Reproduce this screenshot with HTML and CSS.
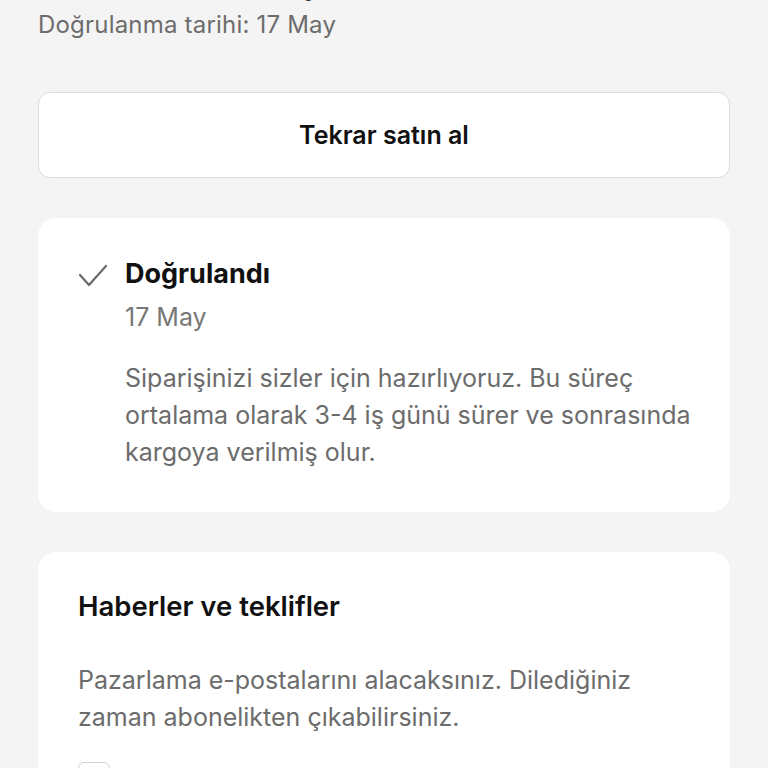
FILE: index.html
```html
<!DOCTYPE html>
<html lang="tr">
<head>
    <meta charset="UTF-8">
    <meta name="viewport" content="width=device-width, initial-scale=1.0">
    <title>Sipariş detayı</title>
    <link rel="stylesheet" href="styles.css">
</head>
<body>
<div class="page">
    <header class="order-head">
        <h1 class="order-title">Ürünleriniz hazırlanıyor</h1>
        <p class="order-date">Doğrulanma tarihi: 17 May</p>
    </header>

    <button class="btn-outline" type="button">Tekrar satın al</button>

    <section class="card status">
        <svg class="status-icon" width="30" height="24" viewBox="0 0 30 24" aria-hidden="true">
            <polyline points="2,11 11,21 28,2" fill="none" stroke="#6a6a6a" stroke-width="2.2" stroke-linecap="round" stroke-linejoin="round"/>
        </svg>
        <div class="status-body">
            <h2 class="status-title">Doğrulandı</h2>
            <p class="status-date">17 May</p>
            <p class="status-text">Siparişinizi sizler için hazırlıyoruz. Bu süreç ortalama olarak 3-4 iş günü sürer ve sonrasında kargoya verilmiş olur.</p>
        </div>
    </section>

    <section class="card newsletter">
        <h2 class="card-title">Haberler ve teklifler</h2>
        <p class="card-text">Pazarlama e-postalarını alacaksınız. Dilediğiniz zaman abonelikten çıkabilirsiniz.</p>
        <label class="optin">
            <span class="checkbox"></span>
            <span>E-posta almak istiyorum</span>
        </label>
    </section>
</div>
</body>
</html>
```

FILE: styles.css
```css
* {
    box-sizing: border-box;
}

html, body {
    margin: 0;
    padding: 0;
}

body {
    font-family: Inter, Roboto, "Liberation Sans", sans-serif;
    background-color: #f4f4f4;
    color: #111;
    overflow: hidden;
}

.page {
    padding: 0 38px;
    display: flex;
    flex-direction: column;
}

/* Header with the (scrolled) order title */
.order-head {
    margin-top: -31px;
}

.order-title {
    margin: 0;
    font-size: 27px;
    font-weight: 700;
    line-height: 34px;
}

.order-date {
    margin: 8px 0 0;
    font-size: 24px;
    line-height: 28px;
    letter-spacing: 0.2px;
    color: #6c6c6c;
}

.btn-outline {
    margin-top: 53px;
    height: 86px;
    width: 100%;
    background: #fff;
    border: 1px solid #dcdcdc;
    border-radius: 12px;
    font-family: inherit;
    font-size: 25px;
    font-weight: 600;
    color: #111;
}

.card {
    background: #fff;
    border-radius: 18px;
    margin-top: 40px;
    padding: 40px;
}

/* Status card */
.status {
    display: flex;
    gap: 17px;
    padding-right: 36px;
    padding-bottom: 41px;
}

.status-icon {
    flex: none;
    margin-top: 6px;
}

.status-title {
    margin: 0;
    font-size: 27px;
    font-weight: 700;
    line-height: 32px;
}

.status-date {
    margin: 12px 0 0;
    font-size: 25px;
    line-height: 30px;
    color: #777;
}

.status-text {
    margin: 28px 0 0;
    font-size: 25px;
    line-height: 37px;
    color: #6c6c6c;
}

/* Newsletter card */
.newsletter {
    padding-top: 38px;
}

.card-title {
    margin: 0;
    font-size: 27.5px;
    font-weight: 600;
    line-height: 32px;
}

.card-text {
    margin: 40px 0 0;
    font-size: 25px;
    line-height: 37px;
    color: #6c6c6c;
}

.optin {
    display: flex;
    align-items: center;
    gap: 16px;
    margin-top: 26px;
    font-size: 25px;
}

.checkbox {
    width: 32px;
    height: 32px;
    border: 1px solid #d0d0d0;
    border-radius: 6px;
}
```
